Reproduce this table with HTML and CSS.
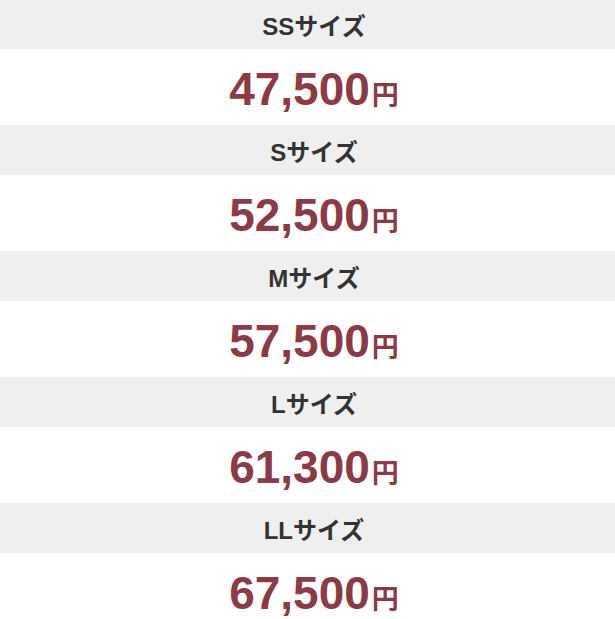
FILE: index.html
```html
<!DOCTYPE html>
<html lang="ja">
<head>
<meta charset="utf-8">
<link rel="stylesheet" href="styles.css">
</head>
<body>
<div class="list">
  <div class="size">SSサイズ</div>
  <div class="price">47,500<span class="yen">円</span></div>
  <div class="size">Sサイズ</div>
  <div class="price">52,500<span class="yen">円</span></div>
  <div class="size">Mサイズ</div>
  <div class="price">57,500<span class="yen">円</span></div>
  <div class="size">Lサイズ</div>
  <div class="price">61,300<span class="yen">円</span></div>
  <div class="size">LLサイズ</div>
  <div class="price">67,500<span class="yen">円</span></div>
</div>
</body>
</html>
```
FILE: styles.css
```css
html, body {
  margin: 0;
  padding: 0;
  background: #fff;
}
body {
  font-family: "Liberation Sans", "Noto Sans CJK JP", sans-serif;
}
.list {
  margin-top: -1px;
  display: flex;
  flex-direction: column;
}
.size {
  height: 50px;
  background: #efefef;
  color: #333;
  font-size: 24px;
  font-weight: bold;
  display: flex;
  align-items: center;
  justify-content: center;
  padding-left: 13px;
  padding-top: 1px;
  box-sizing: border-box;
}
.price {
  height: 76px;
  color: #8a3b46;
  font-size: 46px;
  font-weight: bold;
  display: flex;
  align-items: center;
  justify-content: center;
  padding-top: 3px;
  padding-left: 13px;
  box-sizing: border-box;
}
.yen {
  font-size: 27px;
  align-self: center;
  margin-top: 10px;
  margin-left: 2px;
}
```
